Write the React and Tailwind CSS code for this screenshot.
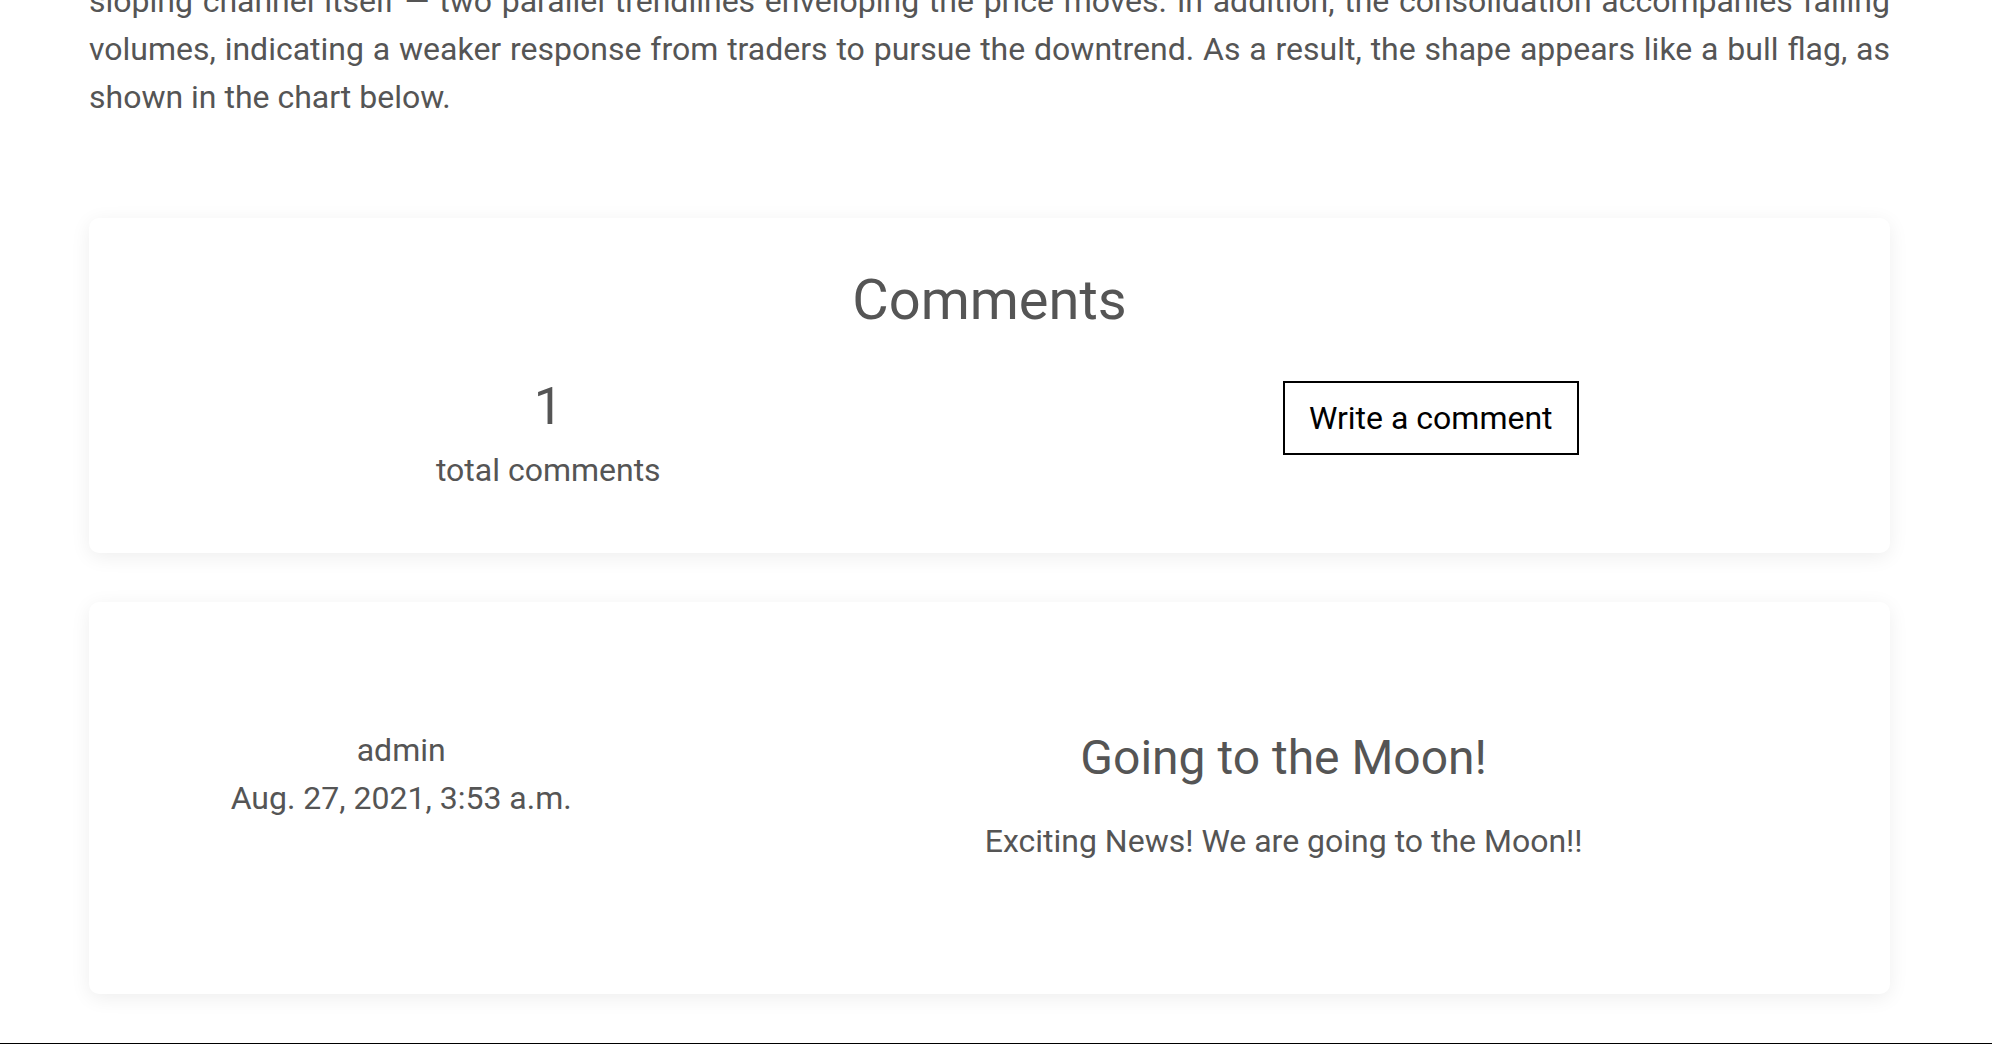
export default function App() {
  return (
    <div className="min-h-screen bg-white font-['Roboto','Liberation_Sans',sans-serif] text-[#555555] overflow-hidden">
      <div className="ml-[89px] w-[1801px]">
        <p className="mt-[-23px] text-[32px] leading-[48px] text-justify">
          sloping channel itself — two parallel trendlines enveloping the price moves. In addition, the consolidation accompanies falling volumes, indicating a weaker response from traders to pursue the downtrend. As a result, the shape appears like a bull flag, as shown in the chart below.
        </p>

        <section className="mt-[97px] rounded-[10px] bg-white px-[18px] pt-[49px] pb-[59px] shadow-[0_4px_20px_rgba(0,0,0,0.07)]">
          <h3 className="text-center text-[56px] leading-[67px]">Comments</h3>
          <div className="mt-[42px] grid grid-cols-2">
            <div className="flex flex-col items-center">
              <span className="text-[52px] leading-[62px]">1</span>
              <span className="mt-[8px] text-[32px] leading-[48px]">total comments</span>
            </div>
            <div className="flex items-start justify-center">
              <button className="mt-[5px] border-2 border-black bg-white px-[24px] py-[11px] text-[32px] leading-[48px] text-black">
                Write a comment
              </button>
            </div>
          </div>
        </section>

        <section className="mt-[49px] rounded-[10px] bg-white px-[18px] pt-[124px] pb-[129px] shadow-[0_4px_20px_rgba(0,0,0,0.07)]">
          <div className="grid grid-cols-3">
            <div className="flex flex-col items-center text-[32px] leading-[48px]">
              <span>admin</span>
              <span>Aug. 27, 2021, 3:53 a.m.</span>
            </div>
            <div className="col-span-2 flex flex-col items-center pt-[3px]">
              <h4 className="text-[48px] leading-[58px]">Going to the Moon!</h4>
              <p className="mt-[30px] text-[32px] leading-[48px]">
                Exciting News! We are going to the Moon!!
              </p>
            </div>
          </div>
        </section>
      </div>
      <div className="mt-[49px] h-[40px] bg-black" />
    </div>
  );
}
